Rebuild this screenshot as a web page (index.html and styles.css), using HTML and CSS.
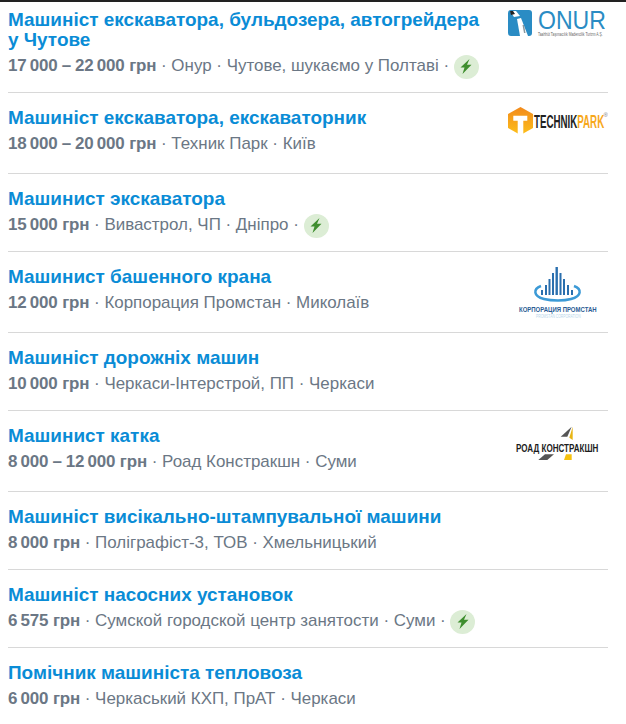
FILE: index.html
```html
<!DOCTYPE html>
<html lang="uk">
  <head>
    <meta charset="UTF-8" />
    <title>Вакансії машиніст</title>
    <link rel="stylesheet" href="styles.css">
  </head>
  <body>
    <div class="top-line"></div>
    <ul class="jobs">
      <li class="job job-first">
        <div class="job-main">
          <a class="job-title" href="#">Машиніст екскаватора, бульдозера, автогрейдера у Чутове</a>
          <p class="job-meta"><b>17&#8201;000<span class="dash"> – </span>22&#8201;000 грн</b> · Онур · Чутове, шукаємо у Полтаві · <span class="bolt"><svg viewBox="0 0 12 15" width="12" height="15"><path d="M9.500 0 .5 8.500h4L2.500 15 11.500 5.800H7z"/></svg></span></p>
        </div>
        <div class="job-logo">
          <svg viewBox="0 0 102 62" width="102" height="62">
            <rect x="2" y="0" width="24" height="26" rx="3" fill="#2a8cc4"/>
            <path d="M4 1h6l4 5-6 1z" fill="#fff"/>
            <path d="M4 1h3l2 3-4 1z" fill="#222"/>
            <path d="M11 9l4-1 7 18h-8z" fill="#fff"/>
            <path d="M16.500 15l1.500 0 1.500 8h-1.500z" fill="#8a979e"/>
            <text transform="translate(32 19) scale(.87 1)" class="onur-name">ONUR</text>
            <text transform="translate(32 26) scale(.75 1)" class="onur-sub">Taahhüt Taşımacılık Madencilik Turizm A.Ş.</text>
          </svg>
        </div>
      </li>
      <li class="job job-logoed">
        <div class="job-main">
          <a class="job-title" href="#">Машиніст екскаватора, екскаваторник</a>
          <p class="job-meta"><b>18&#8201;000<span class="dash"> – </span>20&#8201;000 грн</b> · Техник Парк · Київ</p>
        </div>
        <div class="job-logo">
          <svg viewBox="0 0 102 62" width="102" height="62">
            <defs>
              <linearGradient id="tp" x1="0" y1="0" x2="0" y2="1">
                <stop offset="0" stop-color="#f28a1c"/>
                <stop offset="1" stop-color="#fdc01a"/>
              </linearGradient>
            </defs>
            <path d="M14.500 8 27 15v14L14.500 36 2 29V15z" fill="url(#tp)"/>
            <path d="M7.300 16.700h14v5h-4V36h-5.600V21.700H7.300z" fill="#fff"/>
            <text transform="translate(28 29.300) scale(.557 1)" class="tp-name">TECHNIK<tspan fill="#f7a81b">PARK</tspan></text>
            <text x="97.500" y="17.500" class="tp-reg">®</text>
          </svg>
        </div>
      </li>
      <li class="job">
        <div class="job-main">
          <a class="job-title" href="#">Машинист экскаватора</a>
          <p class="job-meta"><b>15&#8201;000 грн</b> · Вивастрол, ЧП · Дніпро · <span class="bolt"><svg viewBox="0 0 12 15" width="12" height="15"><path d="M9.500 0 .5 8.500h4L2.500 15 11.500 5.800H7z"/></svg></span></p>
        </div>
      </li>
      <li class="job job-logoed">
        <div class="job-main">
          <a class="job-title" href="#">Машинист башенного крана</a>
          <p class="job-meta"><b>12&#8201;000 грн</b> · Корпорация Промстан · Миколаїв</p>
        </div>
        <div class="job-logo">
          <svg viewBox="0 0 102 62" width="102" height="62">
            <path d="M35 28C27 31 27 38 38 41 46 43 58 43 65 41 76 38 76 31 68 28" fill="none" stroke="#3c9ad6" stroke-width="2.500"/>
            <g fill="#2a6fae">
              <rect x="35" y="32" width="2" height="5"/>
              <rect x="39" y="27" width="2" height="10"/>
              <rect x="42.500" y="21" width="2" height="16"/>
              <rect x="46" y="15" width="2" height="22"/>
              <rect x="49.500" y="9" width="2.400" height="28"/>
              <rect x="53.500" y="15" width="2" height="22"/>
              <rect x="57" y="21" width="2" height="16"/>
              <rect x="61" y="27" width="2" height="10"/>
              <rect x="65" y="32" width="2" height="5"/>
            </g>
            <text transform="translate(13 53.700) scale(.857 1)" class="prom-name">КОРПОРАЦИЯ ПРОМСТАН</text>
            <text transform="translate(30 60) scale(.75 1)" class="prom-sub">PROMSTAN CORPORATION</text>
          </svg>
        </div>
      </li>
      <li class="job">
        <div class="job-main">
          <a class="job-title" href="#">Машиніст дорожніх машин</a>
          <p class="job-meta"><b>10&#8201;000 грн</b> · Черкаси-Інтерстрой, ПП · Черкаси</p>
        </div>
      </li>
      <li class="job job-logoed">
        <div class="job-main">
          <a class="job-title" href="#">Машинист катка</a>
          <p class="job-meta"><b>8&#8201;000<span class="dash"> – </span>12&#8201;000 грн</b> · Роад Констракшн · Суми</p>
        </div>
        <div class="job-logo">
          <svg viewBox="0 0 102 62" width="102" height="62">
            <path d="M54.700 19.700 65.700 9.700 61.300 19.700z" fill="#555"/>
            <path d="M66.700 9.700V23L63.300 20.700z" fill="#e8b514"/>
            <text transform="translate(10 34.700) scale(.69 1)" class="road-name">РОАД КОНСТРАКШН</text>
            <path d="M32.300 43 39 37.300h9L41.300 43z" fill="#555"/>
            <path d="M58 43l2-5.700h5.700V43z" fill="#f6c20f"/>
          </svg>
        </div>
      </li>
      <li class="job">
        <div class="job-main">
          <a class="job-title" href="#">Машиніст висікально-штампувальної машини</a>
          <p class="job-meta"><b>8&#8201;000 грн</b> · Поліграфіст-3, ТОВ · Хмельницький</p>
        </div>
      </li>
      <li class="job">
        <div class="job-main">
          <a class="job-title" href="#">Машиніст насосних установок</a>
          <p class="job-meta"><b>6&#8201;575 грн</b> · Сумской городской центр занятости · Суми · <span class="bolt"><svg viewBox="0 0 12 15" width="12" height="15"><path d="M9.500 0 .5 8.500h4L2.500 15 11.500 5.800H7z"/></svg></span></p>
        </div>
      </li>
      <li class="job job-last">
        <div class="job-main">
          <a class="job-title" href="#">Помічник машиніста тепловоза</a>
          <p class="job-meta"><b>6&#8201;000 грн</b> · Черкаський КХП, ПрАТ · Черкаси</p>
        </div>
      </li>
    </ul>
  </body>
</html>
```

FILE: styles.css
```css
html,
body {
  margin: 0;
  padding: 0;
  background: #fff;
  overflow: hidden;
}

body {
  font-family: "Liberation Sans", Arial, sans-serif;
  color: #6b7785;
  height: 724px;
}

.top-line {
  height: 2px;
  background: #222;
}

.jobs {
  list-style: none;
  margin: 0;
  padding: 0 18px 0 8px;
}

.job {
  display: flex;
  justify-content: space-between;
  align-items: flex-start;
  border-bottom: 1px solid #d8d8d8;
  padding: 15px 0 14px;
}

.job-first {
  padding: 8px 0 14px;
}

.job-logoed {
  padding-bottom: 17px;
}

.job-last {
  border-bottom: 0;
}

.job-main {
  flex: 1;
  min-width: 0;
}

/* logos are taller than the text, so they hang over the row padding */
.job-logo {
  flex: none;
  display: flex;
  margin: -9px 0 -14px 16px;
}

.job-first .job-logo {
  margin-top: 0;
}

.job-title {
  display: block;
  font-size: 18.960px;
  font-weight: bold;
  line-height: 20px;
  color: #0a8cd6;
  text-decoration: none;
  max-width: 480px;
}

.job-meta {
  margin: 4px 0 0;
  font-size: 16.950px;
  line-height: 24px;
  height: 24px;
  white-space: nowrap;
}

.job-meta b {
  letter-spacing: -0.15px;
}

.dash {
  word-spacing: -0.5px;
}

.bolt {
  display: inline-flex;
  align-items: center;
  justify-content: center;
  width: 25px;
  height: 24px;
  border-radius: 50%;
  background: #dcedd5;
  vertical-align: middle;
}

.bolt path {
  fill: #3e8e2e;
}

.onur-name {
  font: 26.500px "Liberation Sans", sans-serif;
  fill: #2a8cc4;
}

.onur-sub {
  font: 4.500px "Liberation Sans", sans-serif;
  fill: #666;
}

.tp-name {
  font: bold 17.500px "Liberation Sans", sans-serif;
  fill: #222;
}

.tp-reg {
  font: 6px "Liberation Sans", sans-serif;
  fill: #777;
}

.prom-name {
  font: bold 7px "Liberation Sans", sans-serif;
  fill: #2b5c94;
}

.prom-sub {
  font: 4.500px "Liberation Sans", sans-serif;
  fill: #b8d5ea;
}

.road-name {
  font: bold 11.700px "Liberation Sans", sans-serif;
  fill: #1c1c1c;
}
```
